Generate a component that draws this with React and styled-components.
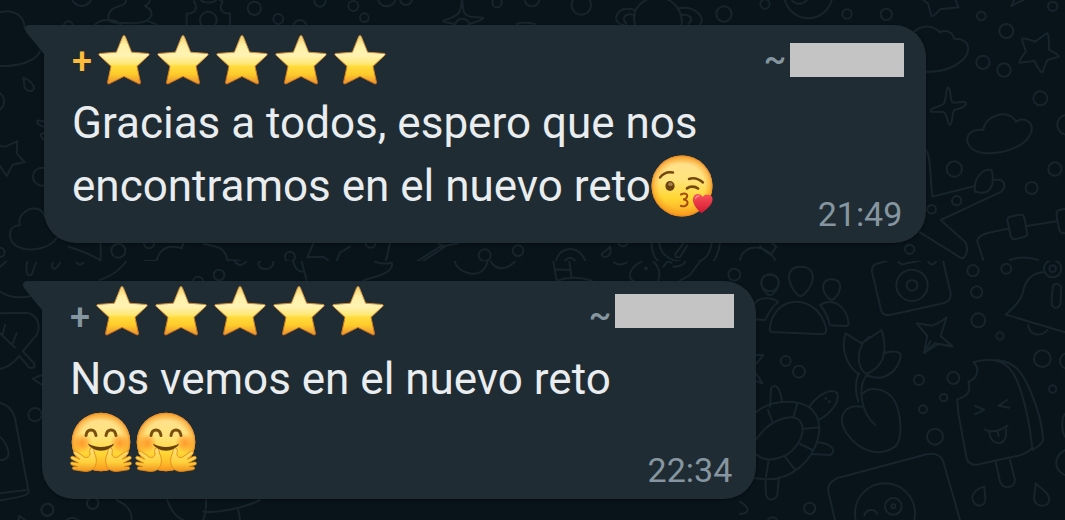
import React from "react";
import styled, { createGlobalStyle } from "styled-components";

const GlobalStyle = createGlobalStyle`
  * {
    box-sizing: border-box;
  }

  body {
    margin: 0;
    background: #08131a;
    font-family: Roboto, "Liberation Sans", sans-serif;
  }
`;

const Chat = styled.main`
  display: flex;
  flex-direction: column;
  min-height: 100vh;
`;

const Section = styled.section`
  position: relative;
  overflow: hidden;
  padding: ${({ $top }) => $top}px 24px 18px ${({ $inset }) => $inset}px;

  &:last-child {
    flex: 1;
  }
`;

const Wallpaper = styled.svg`
  position: absolute;
  top: 0;
  left: 0;
  width: 100%;
  height: 100%;
  fill: none;
  stroke: #18242b;
  stroke-linecap: round;
  stroke-linejoin: round;
`;

const Bubble = styled.article`
  position: relative;
  width: ${({ $width }) => $width};
  padding: 7px 0 9px 28px;
  border-radius: 0 32px 32px 32px;
  background: #202c33;
  box-shadow: 0 1px 3px rgba(0, 0, 0, 0.35);
`;

const Tail = styled.svg`
  position: absolute;
  top: 0;
  left: -19px;
  width: 20px;
  height: 32px;
  fill: #202c33;
`;

const Header = styled.header`
  display: flex;
  align-items: center;
  justify-content: space-between;
  height: 60px;
  padding-right: 22px;
`;

const Group = styled.div`
  display: flex;
  align-items: center;
  gap: ${({ $gap }) => $gap}px;
`;

const Plus = styled.span`
  color: ${({ $color }) => $color};
  font-size: 36px;
  font-weight: 500;
  line-height: 40px;
`;

const Stars = styled.span`
  display: flex;
  gap: 7px;
  padding-bottom: ${({ $lift }) => $lift}px;
`;

const StarIcon = styled.svg`
  width: 52px;
  height: 50px;
`;

const Tilde = styled.span`
  padding-bottom: 8px;
  color: #8696a0;
  font-size: 34px;
  font-weight: 500;
  line-height: 40px;
`;

const Hidden = styled.span`
  padding-bottom: ${({ $lift }) => $lift}px;

  &::before {
    content: "";
    display: block;
    width: ${({ $width }) => $width}px;
    height: 34px;
    background: #c4c4c4;
  }
`;

const Body = styled.div`
  display: flex;
  justify-content: space-between;
  padding-right: 24px;
`;

const Text = styled.p`
  margin: 0;
  color: #e9edef;
  font-size: 44px;
  line-height: 63px;
`;

const Time = styled.time`
  align-self: flex-end;
  margin-top: 102px;
  color: #8696a0;
  font-size: 34px;
  line-height: 40px;
`;

const Emoji = styled.svg`
  width: 62px;
  height: 62px;
  margin-right: 3px;
  vertical-align: -16px;
`;

const Defs = styled.svg`
  position: absolute;
  width: 0;
  height: 0;
`;

const Gradients = () => (
  <Defs aria-hidden="true">
    <defs>
      <linearGradient id="star" x1="0" y1="0" x2="0" y2="1">
        <stop offset="0" stopColor="#f3cf6b" />
        <stop offset="0.2" stopColor="#fff0a6" />
        <stop offset="0.4" stopColor="#fff3b4" />
        <stop offset="0.59" stopColor="#ffe774" />
        <stop offset="0.63" stopColor="#ffdc3c" />
        <stop offset="0.8" stopColor="#fdcb2b" />
        <stop offset="1" stopColor="#ea8f30" />
      </linearGradient>
      <linearGradient id="starEdge" x1="0" y1="0" x2="0" y2="1">
        <stop offset="0" stopColor="#d39a48" />
        <stop offset="1" stopColor="#d0701c" />
      </linearGradient>
      <linearGradient id="face" x1="0" y1="0" x2="0" y2="1">
        <stop offset="0" stopColor="#fbc04c" />
        <stop offset="0.15" stopColor="#ffe08a" />
        <stop offset="0.4" stopColor="#ffe47c" />
        <stop offset="0.7" stopColor="#ffd633" />
        <stop offset="1" stopColor="#fba524" />
      </linearGradient>
      <radialGradient id="rim" cx="0.5" cy="0.5" r="0.5">
        <stop offset="0.74" stopColor="#f6951a" stopOpacity="0" />
        <stop offset="0.92" stopColor="#f6951a" stopOpacity="0.5" />
        <stop offset="1" stopColor="#e97c1a" stopOpacity="0.85" />
      </radialGradient>
      <radialGradient id="cheek">
        <stop offset="0" stopColor="#ff7b16" stopOpacity="0.7" />
        <stop offset="0.5" stopColor="#ff8318" stopOpacity="0.45" />
        <stop offset="1" stopColor="#ff8a1c" stopOpacity="0" />
      </radialGradient>
      <linearGradient id="heart" x1="0" y1="0" x2="0" y2="1">
        <stop offset="0" stopColor="#f9525a" />
        <stop offset="1" stopColor="#d31830" />
      </linearGradient>
      <linearGradient id="hand" x1="0" y1="0" x2="0" y2="1">
        <stop offset="0" stopColor="#ffe07a" />
        <stop offset="0.6" stopColor="#ffd23c" />
        <stop offset="1" stopColor="#f0921e" />
      </linearGradient>
    </defs>
  </Defs>
);

const Star = () => (
  <StarIcon viewBox="0 0 52 50">
    <path
      d="M24.8 1.4Q26 -.2 27.2 1.4L33.6 17.2L50.3 18.5Q51.8 19 50.8 20.3L39 31.3L42.5 47.6Q42.4 49.4 40.8 48.8L26 41.4L11.2 48.8Q9.6 49.4 9.5 47.6L13 31.3L1.200 20.3Q.2 19 1.700 18.5L18.400 17.200Z"
      fill="url(#star)"
      stroke="url(#starEdge)"
      strokeWidth="1"
    />
  </StarIcon>
);

const Kiss = () => (
  <Emoji viewBox="0 0 62 62" role="img" aria-label="😘">
    <circle cx="31" cy="31" r="30.5" fill="url(#face)" />
    <circle cx="31" cy="31" r="30.5" fill="url(#rim)" />
    <g fill="none" stroke="#74480f" strokeLinecap="round">
      <path d="M9 22.5C12 18.5 17 16.5 22 17.5" strokeWidth="2.4" />
      <path d="M38 24C43 22.2 48 24 52 27.5" strokeWidth="2.4" />
      <path d="M36 33.4C39 31 44 31.2 47 33.5" strokeWidth="2.8" />
      <path
        d="M30 39.5C34 37.500 37 39 36 42C35.400 43.800 33.500 44.500 32 44.600C35.500 44.500 37.400 46.500 36.300 49C35.300 51.400 32 51.800 29.800 50.800"
        stroke="#a24b12"
        strokeWidth="2"
      />
    </g>
    <ellipse cx="19" cy="31" rx="4.6" ry="5" fill="#68430f" />
    <ellipse cx="19.5" cy="29.2" rx="2.2" ry="1.9" fill="#a6804a" />
    <path
      d="M50.5 58.2C46 54.8 41 48.5 42 43.2C43.2 38 49.2 37.4 51.7 42C54.5 38.5 60.2 38.8 61.5 43.3C62.3 49.5 55.5 54.5 50.5 58.2Z"
      fill="url(#heart)"
    />
    <path d="M44.5 43.5Q45.5 40.8 48 41" fill="none" stroke="#ff8b8c" strokeWidth="1.4" strokeLinecap="round" />
  </Emoji>
);

const HAND =
  "M21 37C23.2 36.5 24.2 39.5 24.4 42C26.5 46 27 50.5 25.5 54.5C23.6 59.3 18.5 61.3 13 60.2L3.8 58.8C1.7 58.2 2 55.6 4.2 55.7L8 55.7L1.8 54C-.2 53.2.4 50.7 2.4 51L8.5 51.9L1.6 48.3C-.1 47.1.8 44.6 3 45.3L9.8 48.3L4.2 43C2.8 41.3 4.7 39.3 6.5 40.7L14.8 46.3C17 47 20 46 20.1 43C19.7 40.8 19 37.8 21 37Z";

const Hug = () => (
  <Emoji viewBox="0 0 62 62" role="img" aria-label="🤗">
    <circle cx="31" cy="31" r="29.3" fill="url(#face)" />
    <circle cx="31" cy="31" r="29.3" fill="url(#rim)" />
    <circle cx="12" cy="32" r="10" fill="url(#cheek)" />
    <circle cx="50" cy="32" r="10" fill="url(#cheek)" />
    <g fill="none" stroke="#77500f" strokeLinecap="round">
      <path d="M16 24.5C17 17 25 17 26 24.5M36 24.5C37 17 45 17 46 24.5" strokeWidth="3" />
    </g>
    <path d="M18 32.5C25 37 37 37 44 32.5C41 42 21 42 18 32.5Z" fill="#67400c" />
    <path d={HAND} fill="url(#hand)" stroke="#db8519" strokeWidth="0.8" />
    <path d={HAND} transform="translate(62 0) scale(-1 1)" fill="url(#hand)" stroke="#db8519" strokeWidth="0.8" />
  </Emoji>
);

const Dots = ({ items }) =>
  items.map(([x, y, r]) => <circle key={`${x}-${y}-${r}`} cx={x} cy={y} r={r} />);

// Each group of doodles is drawn at three times its size on the page.
const Doodles = ({ x, y, dots, d }) => (
  <g transform={`translate(${x} ${y}) scale(0.3333)`} strokeWidth="6">
    <Dots items={dots} />
    <path d={d} />
  </g>
);

const UpperWallpaper = () => (
  <Wallpaper viewBox="0 0 1065 261" preserveAspectRatio="xMinYMin slice" aria-hidden="true">
    <Doodles
      x={0}
      y={0}
      dots={[
        [245, -12, 30], [763, 25, 20], [835, 57, 15], [900, 80, 20], [960, 3, 17],
        [1060, 18, 15], [1093, 53, 13], [1160, -8, 27], [625, 60, 25], [205, 78, 14], [126, 530, 27], [0, 757, 14],
      ]}
      d="M0 37C40 25 72 45 75 85M120 155C110 180 60 200 0 198
        M70 233C88 240 103 253 102 265C98 277 80 275 74 263ZM0 280C15 290 18 315 0 328
        M0 438L16 440L52 424L50 460L74 486L38 494L20 528L0 498M130 365C105 355 105 370 130 380M130 400C118 400 122 410 130 418
        M60 676C50 650 80 622 110 626C125 629 132 640 134 650M60 676C22 676 20 720 52 740C90 758 150 745 170 714
        M378 0C380 25 330 10 325 50C323 72 345 68 390 70C460 72 470 35 435 18M435 18C450 10 450 0 448 -5M285 74C300 55 350 55 362 74M440 62L470 74
        M600 -5C605 12 645 12 652 -5L668 5C655 25 665 42 690 40L690 74M582 4C595 25 585 42 560 40L560 74"
    />
    <Doodles
      x={400}
      y={0}
      dots={[[18, -3, 18], [187, 78, 22], [291, 8, 14], [396, -3, 22], [544, 15, 29], [972, 42, 23]]}
      d="M186 -10C190 35 188 44 212 50L250 53C248 62 220 66 205 74M186 -10C185 40 178 47 130 62C128 70 150 66 162 72
        M705 74C690 20 740 -10 775 -8C815 -8 850 30 845 74M704 30C650 10 630 70 670 74M705 45C670 35 665 60 680 72M837 25C880 15 920 50 900 74M842 45C875 40 880 60 865 72M350 72Q375 65 405 72"
    />
    <Doodles
      x={740}
      y={0}
      dots={[
        [75, 12, 14], [205, -17, 72], [178, -18, 29], [321, 42, 14], [439, 43, 17], [724, 48, 13],
        [938, 19, 14], [799, 93, 21], [729, 187, 20], [792, 210, 20], [901, 295, 21], [643, 507, 23], [945, 507, 20], [982, 374, 30],
      ]}
      d="M545 -3L564 10L574 48Q580 51 600 28L656 22L644 -5M825 -4L814 18L850 0
        M920 100Q928 98 927 150Q955 162 957 170L922 180L907 217Q900 217 883 183L838 188Q838 180 858 155L845 117Q850 112 885 125Z
        M520 97C545 72 580 75 600 97C618 88 638 95 642 116C692 114 696 157 662 185C630 210 595 218 555 215
        M625 262C635 270 628 306 640 308L674 305C688 316 660 327 642 330C635 342 640 368 629 375C621 370 625 345 610 336L572 335C568 325 600 320 611 312C620 300 615 270 625 262Z
        M730 390C735 342 810 326 828 365C855 348 887 370 871 403C852 444 779 464 732 459C670 455 661 384 730 390Z
        M556 450C575 460 570 560 578 590L705 558M760 540C795 535 800 555 785 575L602 660L675 725C690 750 675 775 665 775L540 697
        M705 575C700 530 730 505 755 510C765 550 755 590 705 575M730 780L712 725Q710 710 740 700L805 686M860 678L950 664M810 650L840 644Q850 642 852 650L862 700Q862 710 850 712L825 718Q814 718 812 708L802 660Q802 652 810 650M975 627C945 630 950 635 950 650L958 690Q960 700 975 700M810 780Q850 765 895 780"
    />
    <Doodles
      x={740}
      y={170}
      dots={[[875, 54, 18], [650, 92, 14], [575, 118, 13], [509, 238, 14]]}
      d="M0 270C10 220 80 220 105 270M60 228C70 240 80 250 93 254L109 230L95 218"
    />
    <Doodles
      x={0}
      y={230}
      dots={[[355, 62, 21], [447, 40, 15], [870, 80, 15], [1112, 38, 15]]}
      d="M205 50C235 60 270 70 302 92L302 40M435 92L470 92C480 50 510 45 545 55L550 40M612 42C650 50 675 50 682 90L720 92
        M940 40L922 82L970 80L985 92M1010 92L1020 68L1050 50M1170 40L1158 92"
    />
    <Doodles
      x={390}
      y={230}
      dots={[[284, 76, 18], [384, 62, 16], [699, 34, 15]]}
      d="M80 95L150 50L205 40M145 40L165 50L100 92M498 92C510 45 570 45 585 92M525 92Q540 75 555 92M660 50C668 78 645 88 635 75C635 65 650 65 660 50
        M785 40C785 65 795 85 805 94M808 40C812 70 835 92 870 94M965 40C960 70 945 90 925 94M990 40Q985 75 970 94M880 42L856 72C856 88 870 83 872 78L892 46"
    />
  </Wallpaper>
);

const LowerWallpaper = () => (
  <Wallpaper viewBox="0 261 1065 259" preserveAspectRatio="xMinYMin slice" aria-hidden="true">
    <Doodles
      x={0}
      y={0}
      dots={[[105, 1244, 20], [142, 1529, 18]]}
      d="M0 875C30 895 60 895 90 889M20 783L0 800M0 940L75 938C110 940 125 975 110 1005L68 1054L102 1090C108 1102 98 1106 88 1103L58 1068C40 1090 20 1105 0 1106
        M0 1000L45 1043M15 975L8 1003M50 1000L38 1030M125 1125L98 1136L125 1154M0 1208C25 1215 40 1235 45 1255L86 1475C87 1485 75 1488 0 1502M0 1480L78 1470M0 1310C20 1330 40 1370 10 1380L0 1380M55 1560L58 1548L75 1560"
    />
    <Doodles
      x={0}
      y={230}
      dots={[[657, 135, 16], [594, 155, 15]]}
      d="M82 95C75 125 82 140 92 135C102 130 98 115 108 98M158 98C152 120 165 125 180 98M230 98Q240 110 250 98M378 95C360 120 340 135 300 150M705 94Q720 115 738 95
        M775 100C775 125 820 122 820 98C820 75 790 85 775 98M880 95C885 115 895 125 910 125M905 95L920 150M1125 95Q1145 105 1175 98C1185 130 1120 140 1090 152"
    />
    <Doodles
      x={390}
      y={230}
      dots={[[768, 115, 3], [1033, 134, 18], [1140, 158, 26]]}
      d="M195 94C200 130 280 155 292 95M302 95Q330 135 375 95M490 95L500 152M538 95L545 145M495 118L540 120M500 152Q550 135 605 152M672 97Q690 110 710 97M755 95C715 115 710 145 735 155M790 95C808 110 812 135 805 152M820 110C835 90 830 95 845 98M885 95Q880 110 850 110M930 95L900 135L870 152"
    />
    <Doodles
      x={740}
      y={170}
      dots={[[699, 302, 17], [799, 296, 15], [710, 366, 17], [715, 451, 21], [780, 498, 11], [516, 346, 47], [516, 346, 16], [938, 296, 26], [938, 296, 10]]}
      d="M183 290C230 290 228 340 190 375Q180 382 171 373C135 330 140 290 183 290M90 315C125 315 122 350 99 372Q90 378 81 372C55 345 60 315 90 315M275 328C310 328 305 365 283 386Q275 392 267 386C240 360 245 328 275 328
        M96 486Q86 484 90 470C105 370 230 370 257 470Q262 492 248 493ZM45 400C60 380 95 380 115 396C95 410 85 430 75 450L45 448M240 405C280 380 320 410 326 460Q326 468 315 468L270 466Q262 430 240 405
        M445 272L415 280Q393 285 396 305L423 420Q427 438 450 435L610 400Q634 392 632 370L610 275M475 275Q480 287 500 280L540 272M563 272Q575 295 590 272
        M912 306C870 310 855 335 848 370C840 400 810 420 798 434L975 487M865 466C868 500 910 500 922 480M940 345C935 370 935 390 935 405C945 420 962 412 962 395L964 350C955 338 945 340 940 345M955 278L965 250
        M530 460L575 467Q600 460 620 442L602 498L637 528L584 520L552 548L562 498Z"
    />
    <Doodles
      x={740}
      y={340}
      dots={[
        [137, 63, 15], [177, 95, 18], [537, 120, 15], [640, 114, 18], [611, 173, 11], [549, 208, 12],
        [585, 290, 24], [907, 56, 25], [938, 147, 11], [984, 63, 24], [209, 505, 17], [97, 547, 15], [435, 520, 90], [460, 499, 25], [460, 499, 6], [258, 175, 2], [268, 185, 2],
      ]}
      d="M45 45L70 45L50 70M45 95L67 130L45 122
        M45 220C75 190 125 180 175 188C230 200 245 245 235 290C220 365 150 420 80 418L45 415M48 300C85 240 150 220 178 240C205 275 170 340 115 354C80 365 60 355 45 340
        M96 243L84 210M160 232L172 190M188 267L237 262M180 312L218 330M135 350L164 388M86 360L78 410M90 200L93 145C105 125 122 145 126 185M208 200C240 155 280 145 292 160C300 190 265 225 235 240M235 307C280 312 290 335 270 345L215 342M76 418L78 465C85 485 105 482 112 465L116 418
        M358 102C325 85 300 30 317 -20L365 10L425 -30C445 40 430 80 380 102C345 85 350 10 390 -10M430 40C460 30 480 35 483 45C475 95 430 130 380 105M355 102C345 130 345 155 355 185M380 105C350 145 365 220 406 255
        M367 200C310 190 290 235 320 280C355 330 415 355 465 320C490 300 483 220 465 185C440 140 385 140 370 160
        M285 540L265 455Q260 430 290 415L560 343Q598 335 610 365L660 540M373 527C378 505 405 505 412 522
        M552 37L572 3M555 37L595 12L637 20M0 485C25 500 35 520 0 522
        M700 67C760 50 805 60 830 120C855 180 870 260 877 325Q855 345 820 350L710 374Q685 375 680 355L655 220L652 178C680 170 695 155 685 125C715 115 720 85 700 67M770 60C830 65 850 105 870 150C895 210 905 245 910 300Q905 315 877 330
        M705 198L733 209L705 223M802 180L776 197L807 203M735 269C755 280 785 270 803 257M748 276C750 320 805 325 798 268M773 274L776 288M768 368L780 425C790 450 825 445 825 420L810 360
        M733 440L736 475C740 505 695 505 697 470C700 455 715 445 733 440M887 430L882 475C885 505 930 505 928 475C925 455 900 445 887 430M975 330C940 350 940 390 975 405M975 222C963 235 965 275 975 290"
    />
    <Doodles
      x={40}
      y={390}
      dots={[[22, 360, 18], [158, 340, 17], [97, 408, 25]]}
      d="M230 330C260 345 275 360 275 390M382 330C390 355 405 380 430 390M498 330Q500 360 490 390M490 365C540 370 620 350 660 330M595 360L600 390"
    />
  </Wallpaper>
);

const Message = ({ width, plusColor, lift, hiddenWidth, time, children }) => (
  <Bubble $width={width}>
    <Tail viewBox="0 0 20 32" aria-hidden="true">
      <path d="M20 0H4C0 0 -1 4 1 7L19 29H20Z" />
    </Tail>
    <Header>
      <Group $gap={6}>
        <Plus $color={plusColor}>+</Plus>
        <Stars $lift={lift} role="img" aria-label="⭐⭐⭐⭐⭐">
          {[1, 2, 3, 4, 5].map(n => (
            <Star key={n} />
          ))}
        </Stars>
      </Group>
      <Group $gap={4}>
        <Tilde>~</Tilde>
        <Hidden $width={hiddenWidth} $lift={lift} />
      </Group>
    </Header>
    <Body>
      <Text>{children}</Text>
      <Time>{time}</Time>
    </Body>
  </Bubble>
);

const App = () => (
  <Chat>
    <GlobalStyle />
    <Gradients />
    <Section $top={25} $inset={44}>
      <UpperWallpaper />
      <Message width="88.5%" plusColor="#ffbc38" lift={5} hiddenWidth={114} time="21:49">
        Gracias a todos, espero que nos encontramos en el nuevo reto
        <Kiss />
      </Message>
    </Section>
    <Section $top={20} $inset={42}>
      <LowerWallpaper />
      <Message width="71.5%" plusColor="#8696a0" lift={14} hiddenWidth={119} time="22:34">
        Nos vemos en el nuevo reto <Hug />
        <Hug />
      </Message>
    </Section>
  </Chat>
);

export default App;
